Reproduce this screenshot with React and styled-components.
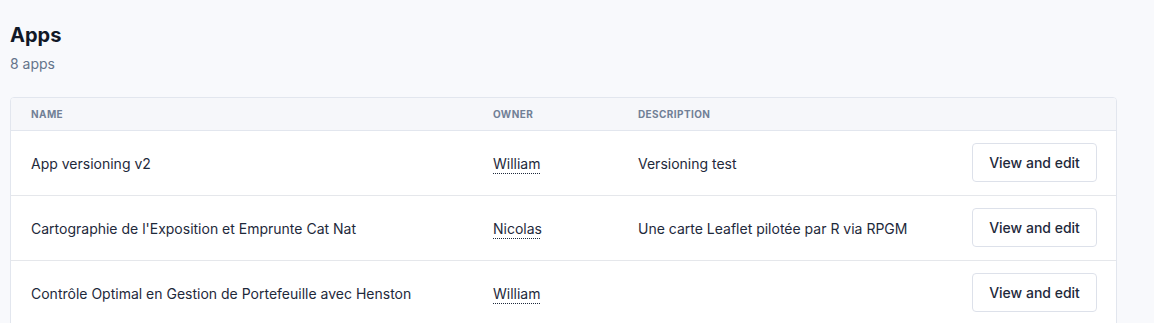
import React from 'react';
import styled, { createGlobalStyle } from 'styled-components';

const GlobalStyle = createGlobalStyle`
  html, body {
    margin: 0;
    background: #f8f9fc;
    font-family: Inter, "Noto Sans", sans-serif;
    color: #1e293b;
  }
`;

const apps = [
  { name: 'App versioning v2', owner: 'William', description: 'Versioning test' },
  {
    name: "Cartographie de l'Exposition et Emprunte Cat Nat",
    owner: 'Nicolas',
    description: 'Une carte Leaflet pilotée par R via RPGM',
  },
  { name: 'Contrôle Optimal en Gestion de Portefeuille avec Henston', owner: 'William', description: '' },
];

export default function App() {
  return (
    <>
      <GlobalStyle />
      <Page>
        <Title>Apps</Title>
        <Count>8 apps</Count>
        <Card>
          <HeaderRow>
            <HeadCell>Name</HeadCell>
            <HeadCell>Owner</HeadCell>
            <HeadCell>Description</HeadCell>
            <HeadCell />
          </HeaderRow>
          {apps.map((app) => (
            <Row key={app.name}>
              <Cell>{app.name}</Cell>
              <Cell>
                <Owner>{app.owner}</Owner>
              </Cell>
              <Cell>{app.description}</Cell>
              <ActionCell>
                <Button>View and edit</Button>
              </ActionCell>
            </Row>
          ))}
        </Card>
      </Page>
    </>
  );
}

const Page = styled.div`
  padding: 21px 37px 0 10px;
`;

const Title = styled.h1`
  margin: 0;
  font-size: 20px;
  line-height: 28px;
  font-weight: 700;
  color: #111827;
`;

const Count = styled.div`
  margin-top: 5px;
  font-size: 14px;
  line-height: 20px;
  color: #64748b;
`;

const Card = styled.div`
  margin-top: 23px;
  border: 1px solid #e2e6ee;
  border-radius: 4px;
  background: #fff;
  overflow: hidden;
`;

const grid = `
  display: grid;
  grid-template-columns: 462px 145px 1fr auto;
  align-items: center;
`;

const HeaderRow = styled.div`
  ${grid}
  height: 32px;
  background: #f6f7fa;
  border-bottom: 1px solid #e2e6ee;
`;

const HeadCell = styled.div`
  padding-left: 20px;
  font-size: 10px;
  font-weight: 700;
  letter-spacing: 0.04em;
  text-transform: uppercase;
  color: #718096;
`;

const Row = styled.div`
  ${grid}
  height: 64px;
  border-bottom: 1px solid #e5e7eb;
`;

const Cell = styled.div`
  padding: 2px 0 0 20px;
  font-size: 14px;
  line-height: 20px;
  color: #1e293b;
`;

const ActionCell = styled.div`
  padding-right: 19px;
  display: flex;
  justify-content: flex-end;
`;

const Owner = styled.span`
  text-decoration: underline dotted #1e293b;
  text-underline-offset: 4px;
  text-decoration-thickness: 1px;
`;

const Button = styled.button`
  width: 125px;
  height: 39px;
  margin-top: -1px;
  border: 1px solid #dde1ea;
  border-radius: 4px;
  background: #fff;
  font-family: Inter, "Noto Sans", sans-serif;
  font-size: 14px;
  font-weight: 500;
  color: #1e293b;
  cursor: pointer;
`;
